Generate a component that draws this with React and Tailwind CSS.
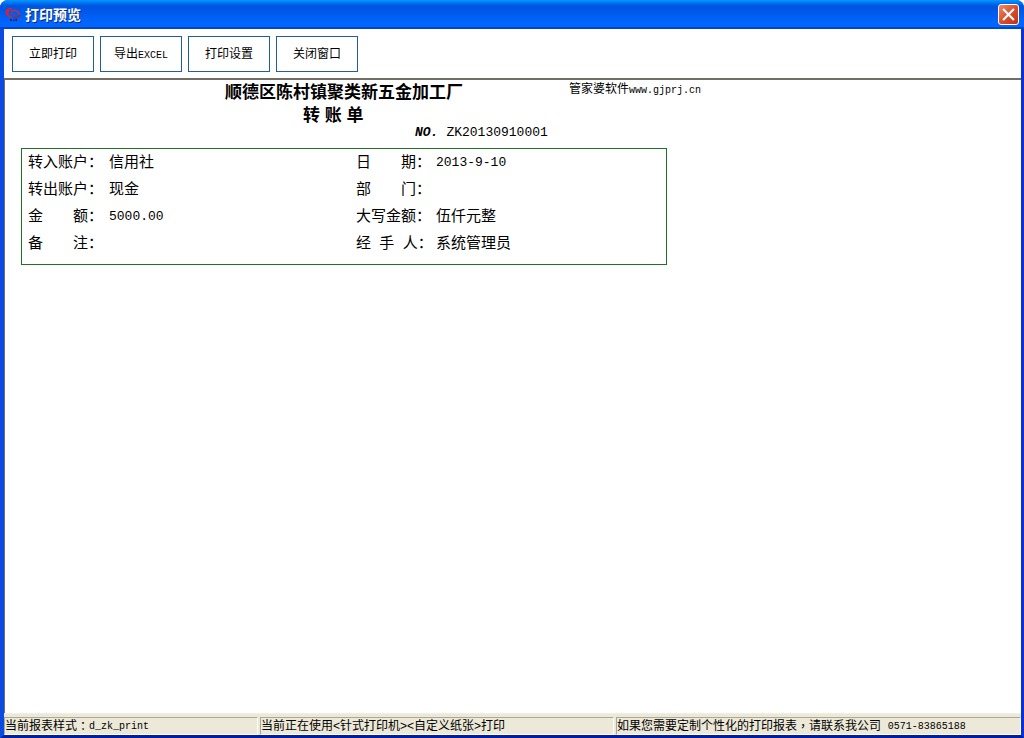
import React from "react";

const toolbarButtons = [
  { id: "print", label: "立即打印" },
  { id: "export", label: "导出", latin: "EXCEL" },
  { id: "setup", label: "打印设置" },
  { id: "close", label: "关闭窗口" },
];

const voucherRows = [
  ["转入账户：", "信用社", "日　　期：", "2013-9-10"],
  ["转出账户：", "现金", "部　　门：", ""],
  ["金　　额：", "5000.00", "大写金额：", "伍仟元整"],
  ["备　　注：", "", "经\u00a0\u00a0手\u00a0\u00a0人：", "系统管理员"],
];

const Latin = ({ children }) => (
  <span className="font-['Liberation_Mono',monospace] text-[10px]">{children}</span>
);

// centred full-width punctuation
const Mark = ({ children }) => (
  <span className="font-['Noto_Sans_CJK_TC',sans-serif]" lang="zh-TW">{children}</span>
);

const FieldValue = ({ children }) => {
  const isLatin = /^[\d.-]+$/.test(children);
  return (
    <dd className={isLatin ? "font-['Liberation_Mono',monospace] text-[13px]" : "text-[15px]"}>
      {children}
    </dd>
  );
};

const AppIcon = () => (
  <svg viewBox="0 0 16 16" className="h-4 w-4 shrink-0" aria-hidden="true">
    <path d="M8.500 1C4.500 0 .5 2 .5 5.300c0 3.200 3.500 5.700 8 5.500-3-.8-5-2.600-5-5C3.500 3.600 5.500 1.800 8.500 1z" fill="#d8232f" />
    <path d="M6 5.500C7 3 10 2.800 12 4.200c1.500 1.100 2.200 2.400 2.300 3.800" fill="none" stroke="#b93050" strokeWidth="1.500" />
    <path d="M6 5.500c.3 2 2.500 3 5 2.800" fill="none" stroke="#b02c58" strokeWidth="1" />
    <path d="M8.500 10.800c3 0 5.500-1 6.500-3.100" fill="none" stroke="#6b3570" strokeWidth="2" />
    <path d="M5 12h2v2H5zM8 12.500h1.500V14H8zM10.500 12H12v2h-1.500z" fill="#17246b" />
  </svg>
);

const TitleBar = () => (
  <header className="flex h-[29px] items-center gap-1 bg-linear-to-b from-[#0997ff] from-0% via-[#0053e0] via-20% to-[#0066ff] to-80% px-[5px] shadow-[inset_0_-2px_0_#0046c8]">
    <AppIcon />
    <h1 className="flex-1 text-[14px] leading-none font-bold text-white [text-shadow:1px_1px_0_#0a2a80]">
      打印预览
    </h1>
    <button
      type="button"
      aria-label="关闭"
      className="flex h-[21px] w-[21px] items-center justify-center rounded-[3px] border border-white bg-linear-to-br from-[#ee8a68] via-[#dc4f2a] to-[#bd3311]"
    >
      <svg viewBox="0 0 12 12" className="h-[13px] w-[13px]" aria-hidden="true">
        <path d="M1 1l10 10M11 1L1 11" stroke="white" strokeWidth="2" />
      </svg>
    </button>
  </header>
);

const Toolbar = () => (
  <div className="flex gap-1.5 px-2 pt-[7px] pb-1.5">
    {toolbarButtons.map((btn) => (
      <button
        key={btn.id}
        type="button"
        className="h-9 w-[82px] border border-[#215f94] bg-white text-[12px] whitespace-nowrap"
      >
        {btn.label}
        {btn.latin && <Latin>{btn.latin}</Latin>}
      </button>
    ))}
  </div>
);

const Report = () => (
  <article className="max-w-[662px] pl-4">
    <div className="grid grid-cols-[1fr_98px] pt-px pl-[204px] leading-[23px]">
      <h2 className="text-[17px] font-bold whitespace-nowrap">顺德区陈村镇聚类新五金加工厂</h2>
      <p className="text-[12px] leading-4 whitespace-nowrap">
        管家婆软件<Latin>www.gjprj.cn</Latin>
      </p>
      <h3 className="pl-[78px] text-[17px] font-bold">转 账 单</h3>
    </div>
    <p className="flex h-[21px] gap-2 pl-[394px] font-['Liberation_Mono',monospace] text-[13px] leading-3">
      <b className="italic">NO.</b>
      <span>ZK20130910001</span>
    </p>
    <dl className="grid auto-rows-[27px] grid-cols-[81px_247px_80px_1fr] items-center border border-[#1f7128] pb-[7px] pl-1.5 whitespace-nowrap">
      {voucherRows.map(([leftLabel, leftValue, rightLabel, rightValue]) => (
        <React.Fragment key={leftLabel}>
          <dt className="text-[15px]">{leftLabel}</dt>
          <FieldValue>{leftValue}</FieldValue>
          <dt className="text-[15px]">{rightLabel}</dt>
          <FieldValue>{rightValue}</FieldValue>
        </React.Fragment>
      ))}
    </dl>
  </article>
);

const StatusPanel = ({ children }) => (
  <div className="flex h-[18px] items-center overflow-hidden border border-t-[#aca899] border-r-white border-b-white border-l-[#aca899] text-[12px] whitespace-pre">
    {children}
  </div>
);

const StatusBar = () => (
  <footer className="grid grid-cols-[254px_354px_1fr] gap-0.5 border-t border-[#f1efe2] bg-[#ece9d8] pt-[3px]">
    <StatusPanel>
      当前报表样式<Mark>：</Mark><Latin>d_zk_print</Latin>
    </StatusPanel>
    <StatusPanel>当前正在使用&lt;针式打印机&gt;&lt;自定义纸张&gt;打印</StatusPanel>
    <StatusPanel>
      如果您需要定制个性化的打印报表<Mark>，</Mark>请联系我公司&nbsp; <Latin>0571-83865188</Latin>
    </StatusPanel>
  </footer>
);

export default function App() {
  return (
    <div className="flex min-h-screen flex-col overflow-hidden rounded-t-lg bg-[#0046d5] font-['Liberation_Sans','Noto_Sans_CJK_SC',sans-serif] text-black">
      <TitleBar />
      <div className="flex flex-1 flex-col border-r-[3px] border-b-[3px] border-l-4 border-r-[#0831d9] border-b-[#001ea0] border-l-[#0a4be0] bg-white">
        <Toolbar />
        <main className="flex-1 border-t-2 border-l border-[#716f64] bg-white">
          <Report />
        </main>
        <StatusBar />
      </div>
    </div>
  );
}
